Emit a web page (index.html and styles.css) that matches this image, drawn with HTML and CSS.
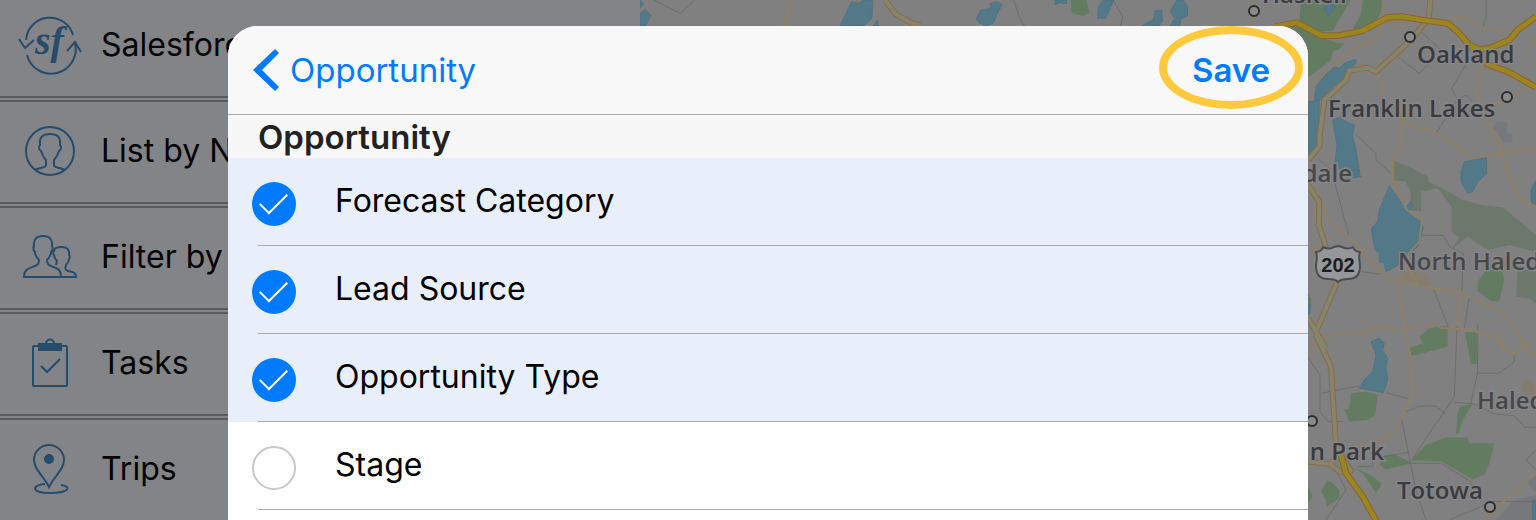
FILE: index.html
```html
<!DOCTYPE html>
<html lang="en">
<head>
    <meta charset="utf-8">
    <title>Opportunity fields</title>
    <link rel="stylesheet" href="styles.css">
</head>
<body>
    <div class="app">
        <nav class="sidebar">
            <a class="menu_item" href="#salesforce">
                <svg class="menu_icon" viewBox="0 0 64 64">
                    <path d="M8 26a24 24 0 0 1 47-5M9 41a24 24 0 0 0 48-12"/>
                    <path d="M1 25l6 9 9-8M49 37l8-9 6 10"/>
                    <text x="17" y="40">sf</text>
                </svg>
                <span>Salesforce</span>
            </a>
            <a class="menu_item" href="#list">
                <svg class="menu_icon" viewBox="0 0 64 64">
                    <circle cx="32" cy="31" r="24"/>
                    <path d="M17 50c6-3 11-2 11-5v-5c-3-3-4-6-5-9-3-2-2-5-1-6-1-8 3-11 10-11s11 3 10 11c1 1 2 4-1 6-1 3-2 6-5 9v5c0 3 5 2 11 5"/>
                </svg>
                <span>List by Name</span>
            </a>
            <a class="menu_item" href="#filter">
                <svg class="menu_icon" viewBox="0 0 64 64">
                    <path d="M6 51c0-7 3-8 11-11 3-1 4-3 4-6-3-3-4-6-4-8-2-2-2-4-1-6-1-7 3-10 9-10s10 3 9 10c1 2 1 4-1 6 0 2-1 5-4 8 0 3 1 5 4 6 8 3 10 4 10 11z"/>
                    <path d="M38 39l1-4c-2-2-3-4-3-6-1-1-1-3 0-4 0-3 3-4 8-4s8 3 7 8c1 1 1 3 0 4 0 2-1 4-3 6-1 3-1 5 2 6 6 1 8 2 8 6H43"/>
                </svg>
                <span>Filter by</span>
            </a>
            <a class="menu_item" href="#tasks">
                <svg class="menu_icon" viewBox="0 0 64 64">
                    <rect x="15" y="14" width="34" height="40" rx="1"/>
                    <path class="solid" d="M21 12h22v6H21z"/>
                    <path d="M28 12c0-6 8-6 8 0M23 34l6 6 13-13"/>
                </svg>
                <span>Tasks</span>
            </a>
            <a class="menu_item" href="#trips">
                <svg class="menu_icon" viewBox="0 0 64 64">
                    <path d="M31 49C26 38 16 32 16 22a15 15 0 0 1 30 0c0 10-10 16-15 27z"/>
                    <circle class="solid" cx="31" cy="21" r="4"/>
                    <path d="M27 46c-14 1-14 9 5 9 18 0 23-6 11-8"/>
                </svg>
                <span>Trips</span>
            </a>
        </nav>

        <svg class="map" viewBox="640 0 896 520" preserveAspectRatio="xMaxYMin slice">
            <!-- strip above the sheet -->
            <g transform="translate(640 0) scale(.3333)">
                <g class="water">
                    <path d="M0 0L12 12 0 25zM0 40L14 28 32 45 18 78H0zM600 78L635 5 655 10 670 0H698L696 55 670 78zM700 78l12-18 2 18zM1020 40l-10 12 10 20z"/>
                    <path d="M1010 60l12-30 30-5V10l20-5 15 10-15 25-12 30-25 8zM1245 0h35v12l-20-4-15 6zM1375 20l15-20h32l-25 55h-24zM1505 78l35-20 5-25 20-3 2 35-10 13zM1590 78l15-22-15-20 20-36h20l13 20v28l-20 8-4 22z"/>
                </g>
                <path class="park" d="M1293 0h48l6 38-16 10-36-8z"/>
                <path class="border" d="M40 0l80 40L165 0M1122 0c8 30 18 60 32 78M1420 0l28 50-6 28"/>
                <path class="street" d="M446 0v25l-14 53M1842 0l-12 78"/>
                <path class="route_case" d="M735 0l33 43 50 28 24 4"/>
                <path class="route" d="M735 0l33 43 50 28 24 4"/>
            </g>
            <!-- area to the right of the sheet -->
            <g transform="translate(1296 0) scale(.3333)">
                <g class="park">
                    <path d="M14 0h150L110 92 60 95 10 65zM-20 70l95 40 45 18 25 2-17 20-18 2-5 28-25 20-44 32zM200 0h62l-7 35-30 55-55-5 25-40z"/>
                    <path d="M165 1180l45-5 35 10-7 60-23 15-55 5-15-35 15-5zM490 1220l40-8-30 48-12 42-8-2 5-55zM250 1395l15-30h35l50 25-80 18zM175 1405l40 15 43 30-18 30-40-60zM75 1475l20-35 15 10 20 20v25l-38 25-2-20zM36 1460l14 30-14 20z"/>
                    <path d="M345 1380l45-45 60-22h65l5 17h75l-15 60-15 35-35 13-40-23-55-30z"/>
                    <path d="M370 1010l30-25 55-7v62l-107 28-8-24 40-15zM507 997h35l3 95h-20zM36 880l10 20-10 30z"/>
                    <path d="M545 845l25-35h50l5 30-15 65-25-2-40-30z"/>
                </g>
                <path class="woods" d="M290 510h35l45 25 70 30 60 35 55 15 65 7 40 33 60 50v50l-80-20-65 15-60-40-50 40 25-35-23-20v-75l-42-55-50 10v60l-35-5 5-50-15-35-40-5zM665 810h55v100l-20-15-40-5zM295 482l55 23 45 25 5 20-110-15z"/>
                <path class="town" d="M305 840l25-32 45 2 30 20-5 30-95-15zM675 1160l18-22 24 20v30l-40-10z"/>
                <path class="quarry" d="M585 385l20-20 30 5-3 25 18 10-2 20-28 3-15-33zM695 1450l25-30v60zM600 1560l55-60 65-15v75z"/>
                <g class="water">
                    <path d="M100 10l20 10-23 28-13-23zM120 200l10 5 15-15 33-12 4 9-22 23-25 35-25 40-10 15H55l5-40 40-50zM36 305l34-5-2 100-8 50-24 25z"/>
                    <path d="M110 360l20-8 20 13 25 10-5 35 10 40 10 65-5 3 10 12-40 5-25-30-13-20 6-50zM505 485l67-13v50l-27 23-15 30-15 5-20-35v-30zM160 510h30l2 10-14 0-8 6z"/>
                    <path d="M280 558l50 67 15 20 30 20 7 15-7 30-10 30-65 60-30 15-5-25-15-5v-25l-12-10-8-35-4-30 19-20 5-35zM330 620l15-15 5 10-10 17zM720 540l-15 30v35l15 15z"/>
                    <path d="M225 1025l25-10 15 15-5 20 15 25-5 25 5 40-13 38-72-13 15-25 25-25 10-50zM36 920l8-10-2 30-6 5zM710 1500h10v60h-10z"/>
                </g>
                <path class="border" d="M570 0v50l-10 35M375 95l55 50M305 170l65 50 30-30M515 185l-48 80 18 35 25-15 18 18M480 305l-60 95M180 405l60 55v20l45 40M65 475l35 30M117 550l42 160M380 706h62l20 35 40 20-5 115M195 815l60 8M412 865l45 115M520 890l-15 95M483 980l-8 210-125 185M315 1250l45 220 30 90M545 970v145l-20 95M545 1120h65l45-35v-25M475 1207l60 5 60 30 60 5 30 35 35 0M37 1075l35 50v110l25 30h45M75 1180l115-22M270 1178l65 18M330 1235l45-17h45l30 25M185 1400h45v-25l110-18M350 1390h85l90 55v45M90 1560l60-90-35-65M460 1560l130-55h130M720 1350l-30 30 30 30"/>
                <path class="street" d="M36 265L165 150l80-40 15-50M260 0v60l30 20 55-5M440 70l35-20 50 10 50 30 55 5M630 95l20 25M695 150l25-40M556 200l-16 80 20 50 50 110 30 100M570 315l65-15 50-30 20-30M235 215l25 30v60M313 360v90l-22 30v75l42 75 45 30-8 65-45 50"/>
                <path class="street" d="M313 360l35 20 60 10 65 45 55 40 192-30M70 600l35 70 60 45 95 110 80 25 70 15 85 10 50 30 75 30 70 100 20 0M36 747h40M305 830l15 130 10 30 15 90 5 100-50 110-50 35-70 10M497 880l-12 100M630 510l45 90 45 20M325 780l40 75M75 1010l150-18 35-15 60 15 95-20 20 12 100 5 20 15 50 5 25 45M36 1060l35-45M605 1020l15 30 35 10 40-15M675 1020l25 40 20 5M560 1560l160-140"/>
                <path class="route_case" d="M403 0l-5 55-53 65-105 95-25-12-55 9-10 28-65 60-13 100-2 40-34 40M36 555l34 50-2 70 22 65M122 850L60 995l-24-40M60 995l30 50M60 1005l45 95 13 210 12 60M36 1385l64 7 40 28M100 1392l35-25 30 45-15 15"/>
                <path class="route" d="M403 0l-5 55-53 65-105 95-25-12-55 9-10 28-65 60-13 100-2 40-34 40M36 555l34 50-2 70 22 65M122 850L60 995l-24-40M60 995l30 50M60 1005l45 95 13 210 12 60M36 1385l64 7 40 28M100 1392l35-25 30 45-15 15"/>
                <path class="highway_case" d="M-63 80l65-12 75 39h50l73-15 75-40 45-2 60 10 75 10 30 25 35 40 30 13 30-3 60-25 25-30 55-40M520 138l55 55 65 24 80 45M135 1365l15 55 50 70 42 75"/>
                <path class="highway" d="M-63 80l65-12 75 39h50l73-15 75-40 45-2 60 10 75 10 30 25 35 40 30 13 30-3 60-25 25-30 55-40M520 138l55 55 65 24 80 45M135 1365l15 55 50 70 42 75"/>
            </g>
            <path class="shield" d="M1316 252c3 0 6-2 7-5 4 2 8 2 11 0l4-1 4 1c4 2 8 2 11 0 1 3 4 5 7 5-2 6 0 9 0 14 0 8-4 13-12 13-5 0-8 1-10 3-2-2-5-3-10-3-8 0-12-5-12-13 0-5 2-8 0-14z"/>
            <text class="shield_text" x="1338" y="272">202</text>
            <g class="place_dot">
                <circle cx="1254" cy="11" r="5"/>
                <circle cx="1410" cy="37" r="5"/>
                <circle cx="1507" cy="97" r="5"/>
                <circle cx="1312" cy="421" r="5"/>
                <circle cx="1490" cy="507" r="5"/>
            </g>
            <g class="place">
                <text x="1262" y="3">Haskell</text>
                <text x="1417" y="63">Oakland</text>
                <text x="1328" y="117">Franklin Lakes</text>
                <text class="minor end" x="1352" y="182">Bloomingdale</text>
                <text class="minor" x="1398" y="270">North Haledon</text>
                <text class="minor" x="1477" y="409">Haledon</text>
                <text class="end" x="1384" y="460">Lincoln Park</text>
                <text x="1397" y="499">Totowa</text>
            </g>
        </svg>
    </div>

    <div class="overlay">
        <form class="sheet">
            <header class="sheet_header">
                <button type="button" class="back_button">
                    <svg class="chevron" viewBox="0 0 26 42"><path d="M22 0l4 4L9 21l17 17-4 4L0 21z"/></svg>
                    Opportunity
                </button>
                <button type="submit" class="save_button">Save</button>
            </header>
            <h2 class="section_title">Opportunity</h2>
            <label class="field_row"><input type="checkbox" name="forecast_category" checked><span>Forecast Category</span></label>
            <label class="field_row"><input type="checkbox" name="lead_source" checked><span>Lead Source</span></label>
            <label class="field_row"><input type="checkbox" name="opportunity_type" checked><span>Opportunity Type</span></label>
            <label class="field_row"><input type="checkbox" name="stage"><span>Stage</span></label>
        </form>
    </div>
</body>
</html>
```

FILE: styles.css
```css
* {
    box-sizing: border-box;
}
body {
    margin: 0;
    height: 100vh;
    overflow: hidden;
    background-color: #808080;
    font-family: Inter, "Liberation Sans", sans-serif;
    font-size: 33px;
    line-height: 40px;
    color: #000;
}
button {
    font: inherit;
    color: #007aff;
    background: none;
    border: none;
    padding: 0;
    cursor: pointer;
}
.app {
    display: grid;
    grid-template-columns: 640px 1fr;
    height: 100vh;
    overflow: hidden;
}

/* left menu */
.sidebar {
    display: flex;
    flex-direction: column;
    gap: 2px;
    margin-top: -6px;
    background-color: #838488;
}
.menu_item {
    display: flex;
    flex: none;
    align-items: center;
    gap: 19px;
    height: 104px;
    padding: 0 18px;
    border-top: 2px solid #5a5b5e;
    border-bottom: 2px solid #5a5b5e;
    color: #030406;
    font-size: 32px;
    text-decoration: none;
}
.menu_item span,
.field_row span {
    padding-bottom: 2px;
}
.menu_icon {
    width: 64px;
    height: 64px;
    fill: none;
    stroke: #264c6c;
    stroke-width: 2;
}
.menu_icon .solid {
    fill: #264c6c;
}
.menu_icon text {
    fill: #264c6c;
    stroke: none;
    font: italic bold 40px "Liberation Serif", serif;
}

/* map */
.map {
    display: block;
    width: 100%;
    height: 100vh;
    background-color: #808080;
}
.map path {
    fill: none;
    stroke-linejoin: round;
}
.map .water path {
    fill: #537988;
    stroke: #466f85;
    stroke-width: 2;
}
.map .park,
.map .park path {
    fill: #637b60;
}
.map .woods {
    fill: #6c786c;
}
.map .town {
    fill: #857d70;
}
.map .quarry {
    fill: #77787c;
}
.map .border {
    stroke: #656565;
    stroke-width: 2;
}
.map .street {
    stroke: #8e8067;
    stroke-width: 6;
}
.map .route_case {
    stroke: #8d6b45;
    stroke-width: 18;
}
.map .route {
    stroke: #85846c;
    stroke-width: 12;
}
.map .highway_case {
    stroke: #8f6030;
    stroke-width: 20;
}
.map .highway {
    stroke: #9a861f;
    stroke-width: 14;
}
.map .shield {
    fill: #96979b;
    stroke: #4c4d50;
    stroke-width: 2;
}
.shield_text {
    font: bold 20px "Liberation Sans", sans-serif;
    fill: #1c1d20;
    text-anchor: middle;
}
.place_dot circle {
    fill: #8a8a8a;
    stroke: #2c2d2f;
    stroke-width: 2;
}
.place text {
    font: 600 24px "Open Sans", sans-serif;
    fill: #393b40;
    stroke: #858585;
    stroke-width: 3;
    paint-order: stroke;
}
.place .minor {
    fill: #45474b;
}
.place .end {
    text-anchor: end;
}

/* field picker sheet */
.overlay {
    position: absolute;
    inset: 0;
    display: flex;
    justify-content: center;
    padding-top: 26px;
    overflow: hidden;
}
.sheet {
    width: 100%;
    max-width: 1080px;
    background-color: #fff;
    border-radius: 30px 30px 0 0;
    overflow: hidden;
}
.sheet_header {
    display: flex;
    justify-content: space-between;
    padding: 0 5px 0 25px;
    background-color: #f8f8f8;
    border-bottom: 1px solid #a9a9ac;
}
.back_button {
    display: flex;
    align-items: center;
    gap: 11px;
}
.chevron {
    width: 26px;
    height: 42px;
    fill: #007aff;
}
.save_button {
    position: relative;
    width: 144px;
    height: 88px;
    font-weight: 600;
}
.save_button::before {
    content: "";
    position: absolute;
    inset: 0 0 5px;
    border: 8px solid #ffc93c;
    border-radius: 50%;
}
.section_title {
    margin: 0;
    padding: 2px 30px 1px;
    font-size: 33px;
    line-height: 40px;
    font-weight: 600;
    color: #222;
    background-color: #f7f7f7;
}
.field_row {
    display: flex;
    align-items: center;
    gap: 39px;
    height: 88px;
    padding: 0 24px;
    font-size: 32px;
    background: linear-gradient(#a9a9ac, #a9a9ac) 30px 100% / 100% 1px no-repeat;
}
.field_row:has(input:checked) {
    background-color: #e8effa;
}
.field_row input {
    appearance: none;
    position: relative;
    width: 44px;
    height: 44px;
    margin: 4px 0 0;
    border: 2px solid #c7c7cc;
    border-radius: 50%;
}
.field_row input:checked {
    border: none;
    background-color: #007aff;
}
.field_row input:checked::before {
    content: "";
    position: absolute;
    left: 8px;
    top: 11px;
    width: 25px;
    height: 12px;
    border: solid #fff;
    border-width: 0 0 2px 2px;
    transform: rotate(-45deg);
}
```
